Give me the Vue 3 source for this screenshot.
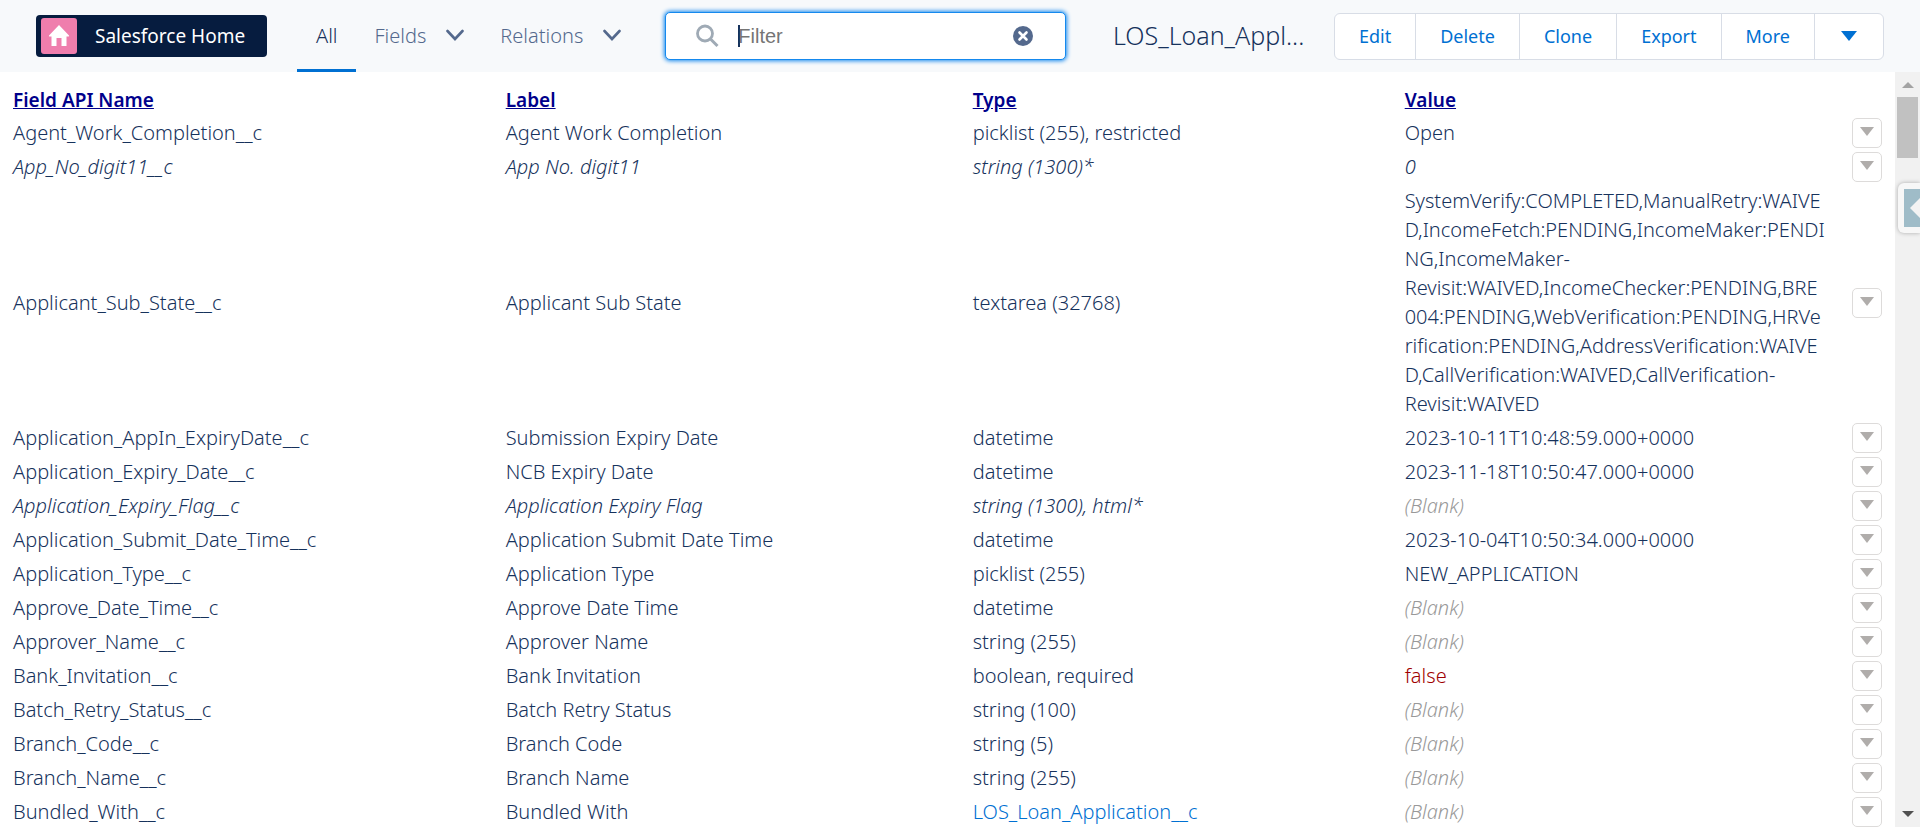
<script setup>
import { ref, onMounted } from 'vue'

const filter = ref('')
const filterBox = ref(null)
onMounted(() => filterBox.value.focus())

const actions = ['Edit', 'Delete', 'Clone', 'Export', 'More']
const headings = ['Field API Name', 'Label', 'Type', 'Value']

const subState = [
  'SystemVerify:COMPLETED,ManualRetry:WAIVE',
  'D,IncomeFetch:PENDING,IncomeMaker:PENDI',
  'NG,IncomeMaker-',
  'Revisit:WAIVED,IncomeChecker:PENDING,BRE',
  '004:PENDING,WebVerification:PENDING,HRVe',
  'rification:PENDING,AddressVerification:WAIVE',
  'D,CallVerification:WAIVED,CallVerification-',
  'Revisit:WAIVED',
].join('\n')

const rows = [
  { name: 'Agent_Work_Completion__c', label: 'Agent Work Completion', type: 'picklist (255), restricted', value: 'Open' },
  { name: 'App_No_digit11__c', label: 'App No. digit11', type: 'string (1300)*', value: '0', calculated: true },
  { name: 'Applicant_Sub_State__c', label: 'Applicant Sub State', type: 'textarea (32768)', value: subState },
  { name: 'Application_AppIn_ExpiryDate__c', label: 'Submission Expiry Date', type: 'datetime', value: '2023-10-11T10:48:59.000+0000' },
  { name: 'Application_Expiry_Date__c', label: 'NCB Expiry Date', type: 'datetime', value: '2023-11-18T10:50:47.000+0000' },
  { name: 'Application_Expiry_Flag__c', label: 'Application Expiry Flag', type: 'string (1300), html*', value: '', calculated: true },
  { name: 'Application_Submit_Date_Time__c', label: 'Application Submit Date Time', type: 'datetime', value: '2023-10-04T10:50:34.000+0000' },
  { name: 'Application_Type__c', label: 'Application Type', type: 'picklist (255)', value: 'NEW_APPLICATION' },
  { name: 'Approve_Date_Time__c', label: 'Approve Date Time', type: 'datetime', value: '' },
  { name: 'Approver_Name__c', label: 'Approver Name', type: 'string (255)', value: '' },
  { name: 'Bank_Invitation__c', label: 'Bank Invitation', type: 'boolean, required', value: 'false' },
  { name: 'Batch_Retry_Status__c', label: 'Batch Retry Status', type: 'string (100)', value: '' },
  { name: 'Branch_Code__c', label: 'Branch Code', type: 'string (5)', value: '' },
  { name: 'Branch_Name__c', label: 'Branch Name', type: 'string (255)', value: '' },
  { name: 'Bundled_With__c', label: 'Bundled With', type: 'LOS_Loan_Application__c', value: '', link: true },
]
</script>

<template>
  <div class="page">
    <header class="bar">
      <a class="home" href="#">
        <span class="home-icon">
          <svg width="24" height="24" viewBox="0 0 24 24"><path d="M12 1L22 11.500Q22.500 12.500 21.500 12.500H19.500V22H14.500V14H9.500V22H4.500V12.500H2.500Q1.500 12.500 2 11.500Z" fill="#fff" /></svg>
        </span>
        Salesforce Home
      </a>
      <nav class="tabs">
        <button class="tab active" type="button">All</button>
        <button class="tab" type="button">Fields
          <svg width="18" height="12" viewBox="0 0 18 12"><path d="M1.500 2L9 10L16.500 2" fill="none" stroke="#54698d" stroke-width="2.600" stroke-linecap="round" /></svg>
        </button>
        <button class="tab" type="button">Relations
          <svg width="18" height="12" viewBox="0 0 18 12"><path d="M1.500 2L9 10L16.500 2" fill="none" stroke="#54698d" stroke-width="2.600" stroke-linecap="round" /></svg>
        </button>
      </nav>
      <div class="search">
        <svg width="24" height="24" viewBox="0 0 24 24"><circle cx="9" cy="9.500" r="7.500" fill="none" stroke="#9faab5" stroke-width="2.800" /><path d="M14.500 15L21.500 22" stroke="#9faab5" stroke-width="3" /></svg>
        <span v-if="!filter" class="caret"></span>
        <input ref="filterBox" v-model="filter" type="text" placeholder="Filter" aria-label="Filter">
        <button class="clear" type="button" aria-label="Clear filter" @click="filter = ''">
          <svg width="20" height="20" viewBox="0 0 20 20"><circle cx="10" cy="10" r="10" fill="#54698d" /><path d="M6.500 6.500L13.500 13.500M13.500 6.500L6.500 13.500" stroke="#fff" stroke-width="2.600" stroke-linecap="round" /></svg>
        </button>
      </div>
      <h1 class="title">LOS_Loan_Appl...</h1>
      <div class="actions">
        <button v-for="a in actions" :key="a" type="button">{{ a }}</button>
        <button class="menu" type="button" aria-label="More actions">
          <svg width="16" height="10" viewBox="0 0 16 10"><path d="M0 0H16L8 10Z" fill="#0070d2" /></svg>
        </button>
      </div>
    </header>
    <div class="body">
      <main class="content">
        <table>
          <colgroup>
            <col class="c-name"><col class="c-label"><col class="c-type"><col class="c-value"><col class="c-menu">
          </colgroup>
          <thead>
            <tr>
              <th v-for="h in headings" :key="h" scope="col"><a href="#">{{ h }}</a></th>
              <td></td>
            </tr>
          </thead>
          <tbody>
            <tr v-for="r in rows" :key="r.name" :class="{ calculated: r.calculated }">
              <td>{{ r.name }}</td>
              <td>{{ r.label }}</td>
              <td><a v-if="r.link" class="ref" href="#">{{ r.type }}</a><template v-else>{{ r.type }}</template></td>
              <td class="value" :class="{ blank: !r.value, no: r.value === 'false' }">{{ r.value || '(Blank)' }}</td>
              <td class="menu-cell">
                <button class="row-menu" type="button" :aria-label="'Actions for ' + r.name">
                  <svg width="14" height="9" viewBox="0 0 14 9"><path d="M0 0H14L7 9Z" fill="#b0adab" /></svg>
                </button>
              </td>
            </tr>
          </tbody>
        </table>
      </main>
      <div class="scroll">
        <svg width="12" height="6" viewBox="0 0 12 6"><path d="M0 6H12L6 0Z" fill="#a3a3a3" /></svg>
        <div class="thumb"></div>
        <svg width="12" height="6" viewBox="0 0 12 6"><path d="M0 0H12L6 6Z" fill="#505050" /></svg>
      </div>
      <button class="side" type="button" aria-label="Open side panel">
        <span><svg width="10" height="20" viewBox="0 0 10 20"><path d="M10 0V20L0 10Z" fill="#f3f3f3" /></svg></span>
      </button>
    </div>
  </div>
</template>

<style>
body {
  margin: 0;
  overflow: hidden;
}
</style>

<style scoped>
.page {
  display: flex;
  flex-direction: column;
  height: 100vh;
  font: 300 20px/29px "Noto Sans", "Open Sans", sans-serif;
  color: #16325c;
  background: #fff;
}
.page * {
  box-sizing: border-box;
}
button {
  font: inherit;
  color: inherit;
  background: none;
  border: 0;
  padding: 0;
}
svg {
  display: block;
  flex: none;
}
.bar {
  display: flex;
  align-items: center;
  height: 72px;
  flex: none;
  padding: 0 36px;
  background: #f7f9fb;
}
.home {
  display: flex;
  align-items: center;
  gap: 18px;
  height: 42px;
  width: 231px;
  padding-left: 5px;
  border-radius: 4px;
  background: #061c3f;
  color: #fff;
  font-size: 19px;
  font-weight: 400;
  text-decoration: none;
  white-space: nowrap;
}
.home-icon {
  display: grid;
  place-items: center;
  width: 36px;
  height: 36px;
  border-radius: 3px;
  background: #ef7ead;
}
.tabs {
  display: flex;
  align-self: stretch;
  margin-left: 30px;
}
.tab {
  display: flex;
  align-items: center;
  gap: 20px;
  padding: 0 18px 2px;
  color: #54698d;
}
.tab.active {
  padding: 0 19px;
  color: #16325c;
  border: solid transparent;
  border-width: 1px 0 3px;
  border-bottom-color: #0070d2;
}
.search {
  display: flex;
  align-items: center;
  flex: 1;
  height: 48px;
  margin-left: 26px;
  padding: 0 32px 0 30px;
  border: 1px solid #1589ee;
  border-radius: 5px;
  background: #fff;
  box-shadow: 0 0 4px 1px #1589ee;
}
.caret {
  width: 2px;
  height: 22px;
  margin-right: -2px;
  background: #16325c;
}
.search svg + .caret {
  margin-left: 18px;
}
.search svg + input {
  margin-left: 18px;
}
.search input {
  flex: 1;
  min-width: 0;
  padding: 0;
  border: 0;
  outline: 0;
  background: none;
  font: 20px/29px "Liberation Sans", Arial, sans-serif;
  color: #16325c;
}
.search .caret + input {
  caret-color: transparent;
}
.search input::placeholder {
  color: #757575;
}
.title {
  width: 194px;
  margin: 0 27px 0 47px;
  padding-bottom: 2px;
  white-space: nowrap;
  font-size: 25px;
  font-weight: 300;
}
.actions {
  display: flex;
  height: 47px;
  border: 1px solid #d8dde6;
  border-radius: 6px;
  background: #fff;
  color: #0070d2;
  font-size: 18px;
  font-weight: 400;
}
.actions button {
  padding: 0 24px;
}
.actions button + button {
  border-left: 1px solid #d8dde6;
}
.actions .menu {
  padding: 0 26px;
}
.body {
  position: relative;
  display: flex;
  flex: 1;
  min-height: 0;
}
.content {
  flex: 1;
  overflow: hidden;
  padding-top: 10px;
}
table {
  width: 100%;
  table-layout: fixed;
  border-collapse: collapse;
}
.c-name {
  width: 26%;
}
.c-label {
  width: 467px;
}
.c-type {
  width: 432px;
}
.c-menu {
  width: 56px;
}
th,
td {
  height: 34px;
  padding: 2px 0 3px 13px;
  text-align: left;
  vertical-align: middle;
}
th {
  padding: 4px 0 1px 13px;
  font-size: 19px;
  font-weight: 600;
}
th a {
  color: #00008b;
}
.calculated {
  font-style: italic;
}
.value {
  white-space: pre;
}
.blank {
  color: #999;
  font-style: italic;
}
.no {
  color: #a00000;
}
.ref {
  color: #0070d2;
  text-decoration: none;
}
.menu-cell {
  padding-top: 2px;
  padding-bottom: 2px;
}
.row-menu {
  display: grid;
  justify-items: center;
  width: 30px;
  height: 30px;
  padding-top: 8px;
  border: 1px solid #dddbda;
  border-radius: 5px;
  background: #fff;
}
.row-menu svg {
  align-self: start;
}
.scroll {
  display: flex;
  flex-direction: column;
  align-items: center;
  width: 25px;
  padding: 10px 0;
  background: #f1f1f1;
}
.thumb {
  width: 21px;
  height: 61px;
  margin: 9px 0 auto;
  background: #c1c1c1;
}
.side {
  position: absolute;
  top: 111px;
  right: 0;
  width: 22px;
  height: 50px;
  padding: 6px 0 6px 6px;
  border-radius: 6px 0 0 6px;
  background: #f7f7f7;
  box-shadow: 0 0 4px #aaa;
}
.side span {
  display: flex;
  align-items: center;
  justify-content: flex-end;
  height: 38px;
  background: #9fbcc8;
}
</style>
